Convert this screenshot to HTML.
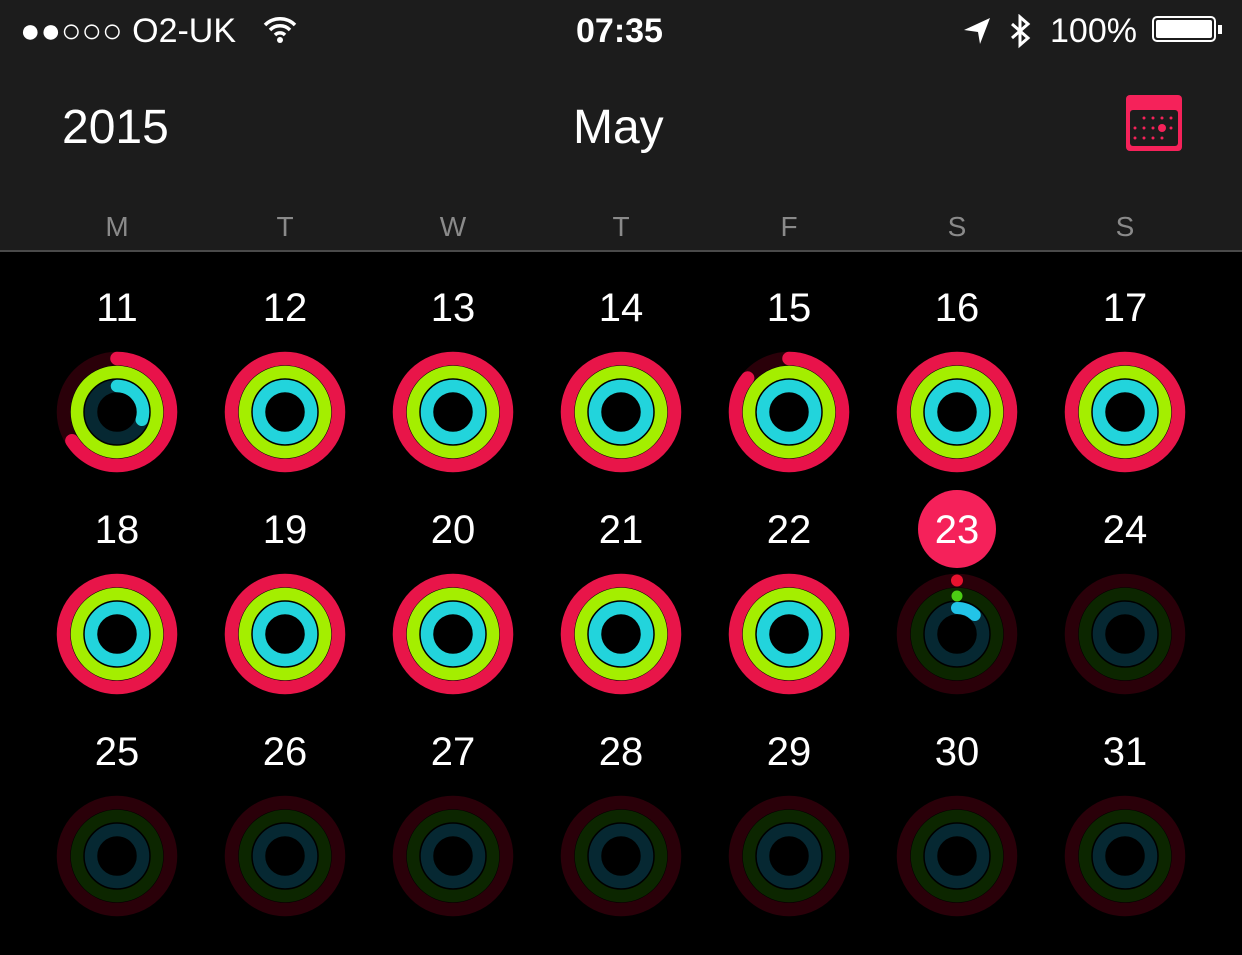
<!DOCTYPE html>
<html><head><meta charset="utf-8"><style>
html,body{margin:0;padding:0;background:#000;width:1242px;height:955px;overflow:hidden;font-family:"Liberation Sans",sans-serif;color:#fff}
.hdr{position:absolute;left:0;top:0;width:1242px;height:250px;background:#1c1c1c;border-bottom:2px solid #4a4a4a}
.t{position:absolute;white-space:nowrap}
</style></head><body>
<div class="hdr"></div>
<div class="t" style="left:20px;top:12px;font-size:34px">●●○○○ O2-UK</div>
<svg class="t" style="left:262px;top:14px" width="36" height="30" viewBox="0 0 36 30"><path d="M3 11a21 21 0 0 1 30 0M8 16a14 14 0 0 1 20 0M13 21a7 7 0 0 1 10 0" stroke="#fff" stroke-width="3.5" fill="none"/><circle cx="18" cy="26" r="3" fill="#fff"/></svg>
<div class="t" style="left:576px;top:12px;font-size:34px;font-weight:bold">07:35</div>
<svg class="t" style="left:960px;top:14px" width="80" height="36" viewBox="0 0 80 36"><path d="M4 16L30 4 20 30 18 18z" fill="#fff"/><path d="M52 10l16 14-8 7V3l8 7-16 14" stroke="#fff" stroke-width="3" fill="none"/></svg>
<div class="t" style="left:1050px;top:12px;font-size:34px">100%</div>
<div class="t" style="left:1152px;top:16px;width:64px;height:26px;border:2px solid #fff;border-radius:5px;box-sizing:border-box;padding:2px"><div style="background:#fff;width:100%;height:100%;border-radius:2px"></div></div>
<div class="t" style="left:1218px;top:25px;width:4px;height:9px;background:#fff"></div>
<div class="t" style="left:62px;top:100px;font-size:48px">2015</div>
<div class="t" style="left:573px;top:100px;font-size:48px">May</div>
<svg class="t" style="left:1124px;top:93px" width="60" height="60" viewBox="0 0 60 60"><rect x="2" y="2" width="56" height="56" rx="4" fill="#f5225a"/><rect x="6" y="17" width="48" height="36" rx="3" fill="#1c1c1c"/><g fill="#f5225a"><circle cx="20" cy="25" r="1.5"/><circle cx="29" cy="25" r="1.5"/><circle cx="38" cy="25" r="1.5"/><circle cx="47" cy="25" r="1.5"/><circle cx="11" cy="35" r="1.5"/><circle cx="20" cy="35" r="1.5"/><circle cx="29" cy="35" r="1.5"/><circle cx="38" cy="35" r="4"/><circle cx="47" cy="35" r="1.5"/><circle cx="11" cy="45" r="1.5"/><circle cx="20" cy="45" r="1.5"/><circle cx="29" cy="45" r="1.5"/><circle cx="38" cy="45" r="1.5"/></g></svg>
<svg class="t" style="left:0;top:200px" width="1242" height="50"><g fill="#8a8a8a" font-size="28" text-anchor="middle" font-family="Liberation Sans"><text x="117" y="36">M</text><text x="285" y="36">T</text><text x="453" y="36">W</text><text x="621" y="36">T</text><text x="789" y="36">F</text><text x="957" y="36">S</text><text x="1125" y="36">S</text></g></svg>
<svg class="t" style="left:0;top:252px" width="1242" height="703" viewBox="0 252 1242 703">
<defs>
<g id="full" fill="none"><circle r="53.5" stroke="#e81549" stroke-width="13.5"/><circle r="40" stroke="#a4ee00" stroke-width="12.5"/><circle r="26" stroke="#22d4dc" stroke-width="12.5"/></g>
<g id="dim" fill="none"><circle r="53.5" stroke="#2a0009" stroke-width="13.5"/><circle r="40" stroke="#0c2600" stroke-width="12.5"/><circle r="26" stroke="#062832" stroke-width="12.5"/></g>
</defs>
<g fill="#fff" font-size="40" text-anchor="middle" font-family="Liberation Sans">
<text x="117" y="321">11</text><text x="285" y="321">12</text><text x="453" y="321">13</text><text x="621" y="321">14</text><text x="789" y="321">15</text><text x="957" y="321">16</text><text x="1125" y="321">17</text>
<text x="117" y="543">18</text><text x="285" y="543">19</text><text x="453" y="543">20</text><text x="621" y="543">21</text><text x="789" y="543">22</text><circle cx="957" cy="529" r="39" fill="#f5215a"/><text x="957" y="543">23</text><text x="1125" y="543">24</text>
<text x="117" y="765">25</text><text x="285" y="765">26</text><text x="453" y="765">27</text><text x="621" y="765">28</text><text x="789" y="765">29</text><text x="957" y="765">30</text><text x="1125" y="765">31</text>
</g>
<g transform="translate(117,412)"><use href="#dim"/><g fill="none" transform="rotate(-90)" stroke-linecap="round"><circle r="53.5" stroke="#e8124a" stroke-width="13.5" pathLength="100" stroke-dasharray="66 100"/><circle r="40" stroke="#a4ee00" stroke-width="12.5" pathLength="100" stroke-dasharray="100 100"/><circle r="26" stroke="#22d4dc" stroke-width="12.5" pathLength="100" stroke-dasharray="30 100"/></g></g>
<use href="#full" x="285" y="412"/><use href="#full" x="453" y="412"/><use href="#full" x="621" y="412"/>
<g transform="translate(789,412)"><use href="#dim"/><g fill="none" transform="rotate(-90)" stroke-linecap="round"><circle r="53.5" stroke="#e8124a" stroke-width="13.5" pathLength="100" stroke-dasharray="86 100"/><circle r="40" stroke="#a4ee00" stroke-width="12.5"/><circle r="26" stroke="#22d4dc" stroke-width="12.5"/></g></g>
<use href="#full" x="957" y="412"/><use href="#full" x="1125" y="412"/>
<use href="#full" x="117" y="634"/><use href="#full" x="285" y="634"/><use href="#full" x="453" y="634"/><use href="#full" x="621" y="634"/><use href="#full" x="789" y="634"/>
<g transform="translate(957,634)"><use href="#dim"/><circle cy="-53.5" r="6" fill="#e8122e"/><circle cy="-38" r="5.5" fill="#4ccc14"/><g transform="rotate(-90)"><circle r="26" fill="none" stroke="#22c4e8" stroke-width="12" stroke-linecap="round" pathLength="100" stroke-dasharray="12 100"/></g></g>
<use href="#dim" x="1125" y="634"/>
<use href="#dim" x="117" y="856"/><use href="#dim" x="285" y="856"/><use href="#dim" x="453" y="856"/><use href="#dim" x="621" y="856"/><use href="#dim" x="789" y="856"/><use href="#dim" x="957" y="856"/><use href="#dim" x="1125" y="856"/>
</svg>
</body></html>
